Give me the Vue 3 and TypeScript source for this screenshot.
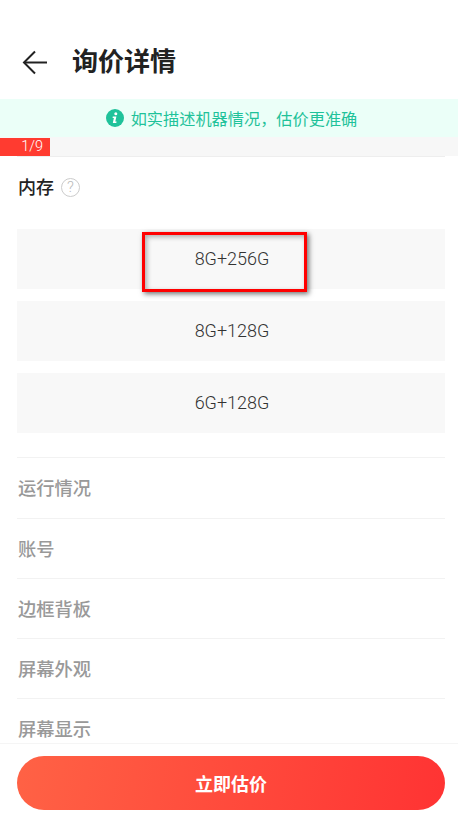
<script setup lang="ts">
const options: string[] = ['8G+256G', '8G+128G', '6G+128G']
const rows: string[] = ['运行情况', '账号', '边框背板', '屏幕外观', '屏幕显示']
</script>

<template>
  <div class="page">
    <header class="header">
      <svg class="back" width="28" height="28" viewBox="0 0 28 28" fill="none" stroke="#222" stroke-width="2">
        <path d="M26 14.5H3.5" />
        <path d="M14 3.5L3 14.5L14 25.5" />
      </svg>
      <h1 class="title">询价详情</h1>
    </header>

    <div class="notice">
      <svg width="18" height="18" viewBox="0 0 18 18">
        <circle cx="9" cy="9" r="9" fill="#1fc29a" />
        <circle cx="9.8" cy="4.8" r="1.5" fill="#fff" />
        <path d="M6.8 7.6H10.4L9.3 12.6H10.6L10.3 14H6.8L7.9 9H6.6Z" fill="#fff" />
      </svg>
      <span>如实描述机器情况，估价更准确</span>
    </div>

    <div class="progress-band">
      <div class="progress">1/9</div>
    </div>

    <main class="content">
      <section class="question">
        <div class="q-head">
          <span class="q-title">内存</span>
          <span class="help">?</span>
        </div>
        <div class="options">
          <div v-for="o in options" :key="o" class="option"><span class="option-text">{{ o }}</span></div>
        </div>
      </section>
      <div v-for="r in rows" :key="r" class="row">{{ r }}</div>
    </main>

    <footer class="footer">
      <button class="submit" type="button">立即估价</button>
    </footer>

    <div class="highlight"></div>
  </div>
</template>

<style scoped>
.page {
  position: relative;
  width: 458px;
  height: 820px;
  overflow: hidden;
  background: #fff;
  display: flex;
  flex-direction: column;
  font-family: "Noto Sans CJK SC", "Noto Sans", sans-serif;
}
.header {
  height: 99px;
  flex: none;
  box-sizing: border-box;
  padding: 24px 0 0 21px;
  display: flex;
  align-items: center;
  gap: 23px;
}
.back { flex: none; }
.title {
  margin: 0;
  padding-bottom: 4px;
  font-size: 26px;
  line-height: 36px;
  font-weight: 700;
  color: #222;
}
.notice {
  height: 38px;
  flex: none;
  box-sizing: border-box;
  padding-left: 5px;
  background: #ebfff8;
  color: #1fc29a;
  font-size: 16.2px;
  display: flex;
  align-items: center;
  justify-content: center;
  gap: 7px;
}
.notice span { padding-bottom: 1px; }
.progress-band {
  height: 19px;
  flex: none;
  background: #f7f7f7;
  box-sizing: border-box;
  padding-top: 1px;
}
.progress {
  width: 50px;
  height: 18px;
  background: #ff3b30;
  color: #fff;
  font-size: 14.5px;
  font-weight: 300;
  line-height: 18px;
  text-align: right;
  padding-right: 7px;
  box-sizing: border-box;
  font-family: Roboto, sans-serif;
}
.content {
  flex: 1;
  min-height: 0;
  overflow: hidden;
  padding: 0 13px 0 17px;
}
.question {
  border-top: 1px solid #eee;
  padding-bottom: 24px;
}
.q-head {
  height: 72px;
  box-sizing: border-box;
  padding-bottom: 12px;
  display: flex;
  align-items: center;
  gap: 7px;
  margin-left: 1px;
}
.q-title {
  font-size: 18px;
  line-height: 26px;
  padding-bottom: 2px;
  font-weight: 500;
  color: #222;
}
.help {
  width: 17px;
  height: 17px;
  border: 1px solid #ccc;
  border-radius: 50%;
  color: #bbb;
  font-size: 15px;
  line-height: 17px;
  text-align: center;
  font-family: Roboto, sans-serif;
  font-weight: 300;
}
.options {
  display: flex;
  flex-direction: column;
  gap: 12px;
}
.option {
  height: 60px;
  background: #f8f8f8;
  color: #333;
  font-family: Roboto, sans-serif;
  font-size: 18px;
  font-weight: 300;
  display: flex;
  align-items: center;
  justify-content: center;
}
.option-text { padding: 0 0 1px 2px; }
.row {
  height: 60px;
  box-sizing: border-box;
  border-top: 1px solid #f2f2f2;
  color: #999;
  font-size: 18.3px;
  font-weight: 500;
  padding: 0 0 2px 1px;
  display: flex;
  align-items: center;
}
.row:first-of-type { height: 61px; }
.footer {
  height: 77px;
  flex: none;
  box-sizing: border-box;
  border-top: 1px solid #f5f5f5;
  background: #fff;
  padding: 12px 13px 0 17px;
}
.submit {
  display: block;
  width: 100%;
  height: 54px;
  border: 0;
  border-radius: 27px;
  background: linear-gradient(100deg, #ff6245, #ff3333);
  color: #fff;
  font-family: inherit;
  font-size: 18px;
  font-weight: 700;
}
.highlight {
  position: absolute;
  left: 142px;
  top: 232px;
  width: 165px;
  height: 60px;
  box-sizing: border-box;
  border: 3px solid #f00;
  box-shadow: 2px 2px 5px rgba(0, 0, 0, 0.55), inset 2px 2px 5px rgba(0, 0, 0, 0.3);
}
</style>
